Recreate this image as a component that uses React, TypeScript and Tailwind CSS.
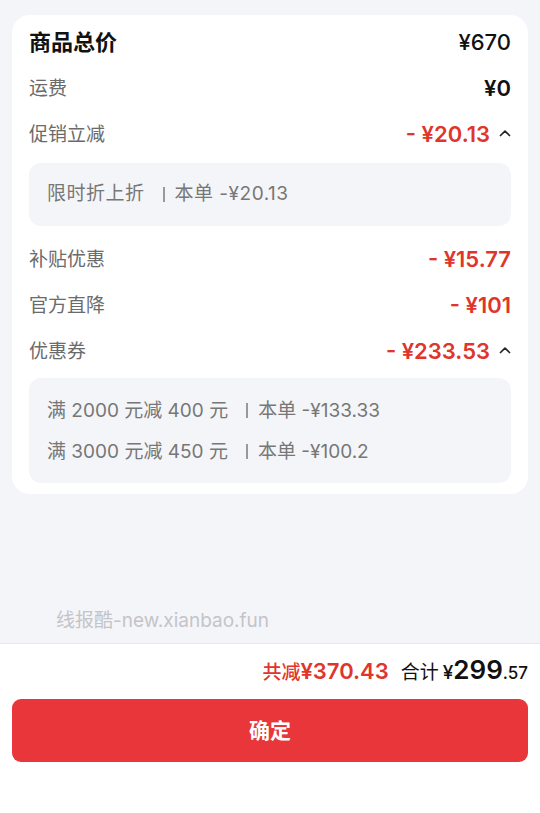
import React from "react";

const Caret = () => (
  <svg width="12" height="8" viewBox="0 0 12 8" className="ml-[9px] mt-[-3px]">
    <polyline points="1.5,6.5 6,2.2 10.5,6.5" fill="none" stroke="#222" strokeWidth="1.7" strokeLinecap="round" strokeLinejoin="round" />
  </svg>
);

const Bar = () => <span className="inline-block w-[2px] h-[15px] bg-[#999] ml-[18px] mr-[10px] align-[-1px]" />;

const Row = ({ label, value, red, caret }: { label: string; value: string; red?: boolean; caret?: boolean }) => (
  <div className="flex items-center justify-between h-[46px]">
    <span className="text-[19px] text-[#6b6b6b] mt-[2px]">{label}</span>
    <div className="flex items-center">
      <span className={red ? "text-[22px] font-semibold text-[#e0352b]" : "text-[22px] font-semibold text-[#111]"}>{value}</span>
      {caret && <Caret />}
    </div>
  </div>
);

export default function App() {
  return (
    <div className="w-[540px] h-[813px] bg-[#f4f5f9] flex flex-col" style={{ fontFamily: 'Inter, "Noto Sans CJK SC", sans-serif' }}>
      <div className="px-3 pt-[15px]">
        <div className="bg-white rounded-[18px] px-[17px] pt-[4px] pb-[11px]">
          <div className="flex items-center justify-between h-[46px]">
            <span className="text-[22px] font-bold text-[#111]">商品总价</span>
            <span className="text-[22px] font-medium text-[#111]">¥670</span>
          </div>
          <Row label="运费" value="¥0" />
          <Row label="促销立减" value="- ¥20.13" red caret />
          <div className="bg-[#f4f5f8] rounded-[12px] h-[63px] mt-[6px] mb-[10px] px-[18px] flex items-center text-[19px] text-[#777] tracking-[0.5px]">
            限时折上折<Bar />本单 -¥20.13
          </div>
          <Row label="补贴优惠" value="- ¥15.77" red />
          <Row label="官方直降" value="- ¥101" red />
          <Row label="优惠券" value="- ¥233.53" red caret />
          <div className="bg-[#f4f5f8] rounded-[12px] mt-[4px] px-[18px] pt-[20px] pb-[18px] flex flex-col gap-[15px] text-[19px] leading-[26px] text-[#777]">
            <span>满 2000 元减 400 元<Bar />本单 -¥133.33</span>
            <span>满 3000 元减 450 元<Bar />本单 -¥100.2</span>
          </div>
        </div>
      </div>
      <div className="flex-1 flex flex-col justify-end">
        <div className="px-[56px] pb-[8px] text-[19px] text-[#c4c4c8]">线报酷-new.xianbao.fun</div>
      </div>
      <div className="bg-white border-t border-[#e8e8ec] h-[170px] px-3 pt-[6px]">
        <div className="flex items-baseline justify-end h-[34px]">
          <span className="text-[19px] text-[#e0352b] font-medium">共减</span>
          <span className="text-[22px] text-[#e0352b] font-semibold">¥370.43</span>
          <span className="text-[19px] text-[#111] ml-[12px]">合计</span>
          <span className="text-[19px] text-[#111] font-medium ml-[4px]">¥</span>
          <span className="text-[26px] text-[#111] font-semibold">299</span>
          <span className="text-[17px] text-[#111] font-medium">.57</span>
        </div>
        <button className="mt-[15px] w-full h-[63px] rounded-[9px] bg-[#e8363a] text-white text-[21px] font-bold flex items-center justify-center">
          确定
        </button>
      </div>
    </div>
  );
}
